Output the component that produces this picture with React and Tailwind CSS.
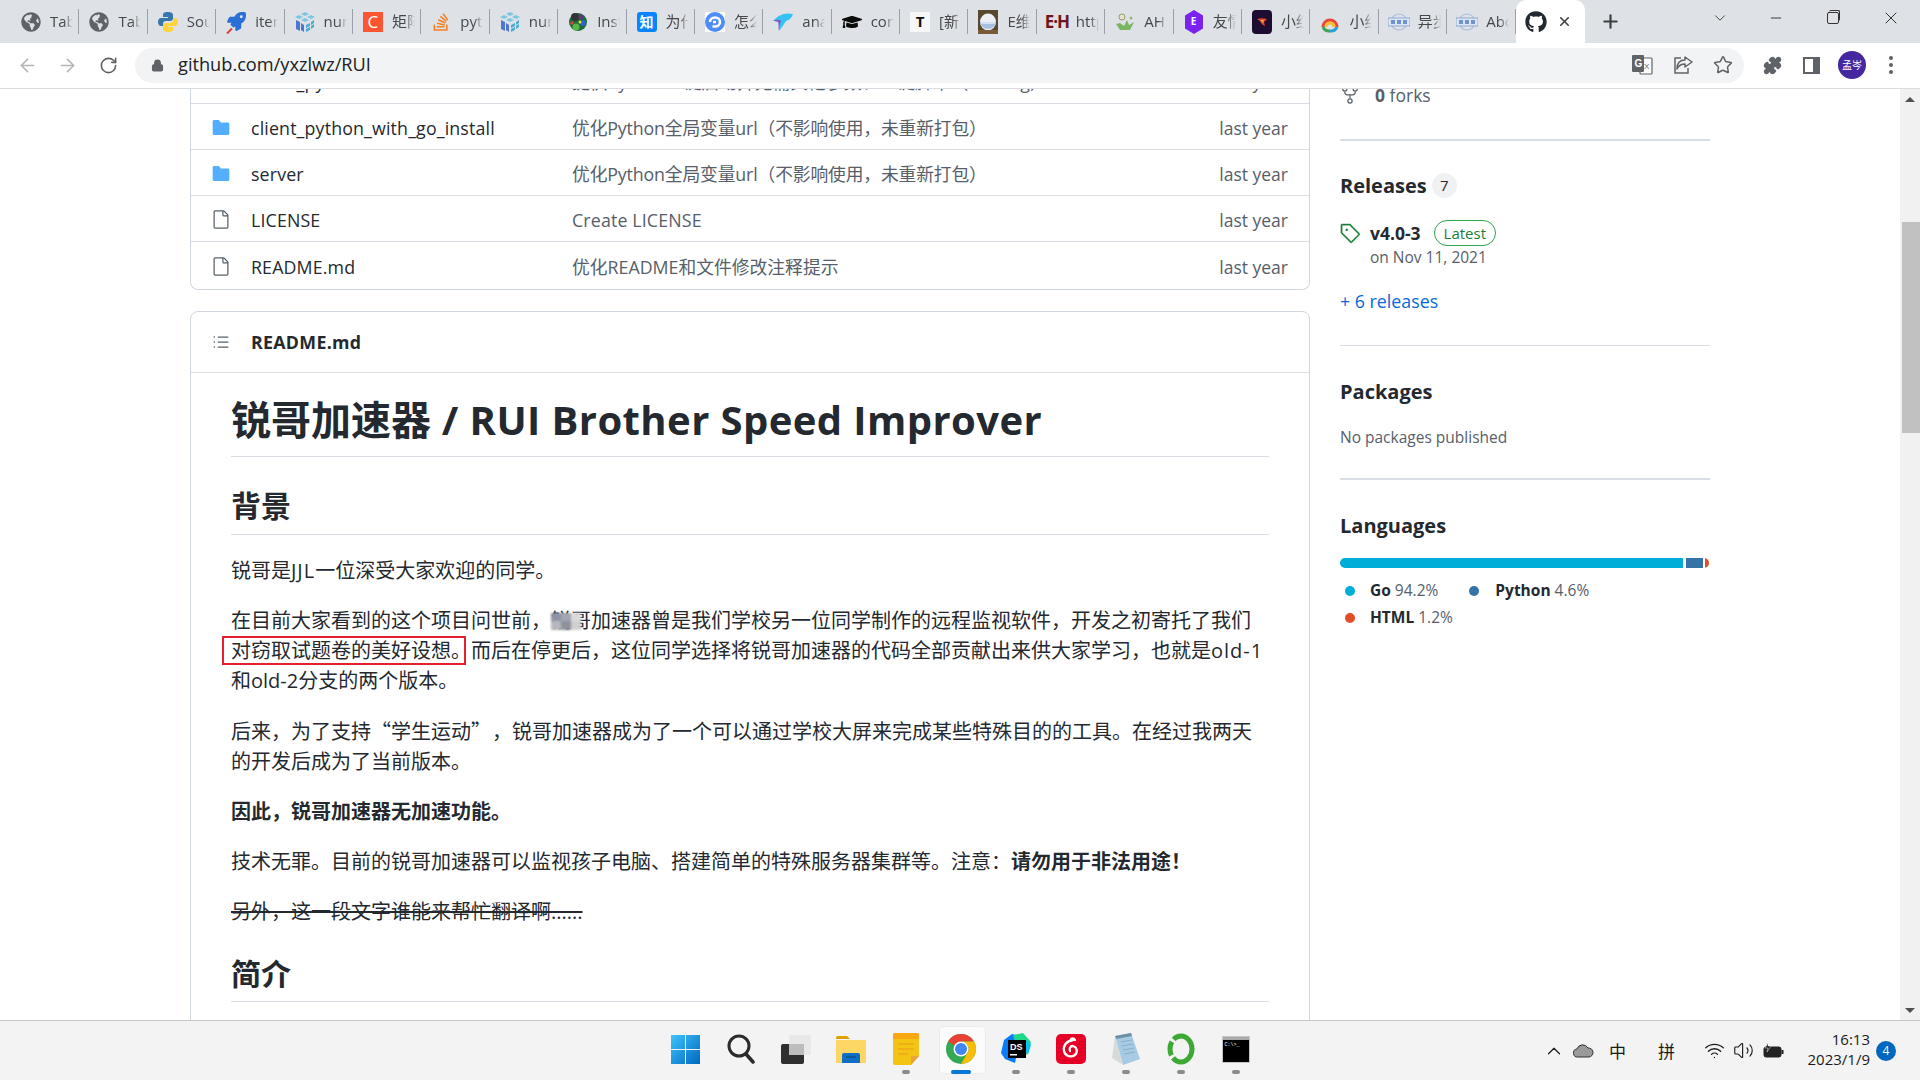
import React from "react";
import { ArrowLeft, ArrowRight, RotateCw, Lock, Star, Puzzle, ChevronDown, ChevronUp, Minus, X, Plus, Wifi, Volume2 } from "lucide-react";
import { FaGlobeAmericas, FaGraduationCap, FaRocket, FaGithub, FaStackOverflow } from "react-icons/fa";
import { GoFile, GoFileDirectoryFill, GoListUnordered, GoRepoForked, GoTag } from "react-icons/go";

function Numpy() {
  return (
    <svg width="20" height="20" viewBox="0 0 20 20">
      <path d="M10 0l4 2-4 2-4-2zM4 3l4 2-4 2-4-2zM16 3l4 2-4 2-4-2zM10 6l4 2-4 2-4-2z" fill="#7cc7e0" />
      <path d="M1 8l4 2v9l-4-2z" fill="#4d77cf" />
      <path d="M6 11l3 2v7l-3-2z" fill="#4d77cf" />
      <path d="M11 13l4-2v3l-4 2zM16 10l3-2v3l-3 2zM11 17l4-2v3l-4 2zM16 14l3-2v3l-3 2z" fill="#4dabcf" />
    </svg>
  );
}
function Py() {
  return (
    <svg width="20" height="22" viewBox="0 0 20 22">
      <path d="M10 1c-4 0-5 1-5 3v2h5v1H3C1 7 0 9 0 11s1 4 3 4h2v-2c0-2 1-3 3-3h4c2 0 3-1 3-3V4c0-2-2-3-5-3z" fill="#3776ab" />
      <path d="M10 21c4 0 5-1 5-3v-2h-5v-1h7c2 0 3-2 3-4s-1-4-3-4h-2v2c0 2-1 3-3 3H8c-2 0-3 1-3 3v3c0 2 2 3 5 3z" fill="#ffd43b" />
    </svg>
  );
}
function Rocket() {
  return (
    <span className="relative flex h-5 w-5 items-center justify-center">
      <FaRocket size={19} color="#2b6fd6" />
      <span className="absolute bottom-0 left-0 h-[2px] w-[7px] -rotate-45 bg-[#d9433a]" />
    </span>
  );
}
function Ins() {
  return (
    <svg width="20" height="24" viewBox="0 0 20 24">
      <circle cx="10" cy="12" r="9" fill="#1c6b3a" />
      <circle cx="7" cy="7" r="4" fill="#333" />
      <circle cx="13" cy="7" r="2.500" fill="#5a3b7a" />
      <circle cx="15" cy="13" r="3" fill="#2f62c9" />
      <circle cx="8" cy="17" r="3.500" fill="#58b947" />
      <circle cx="4" cy="13" r="1.800" fill="#d9433a" />
      <circle cx="12" cy="12" r="1.500" fill="#e9e23a" />
    </svg>
  );
}
function Letter({ bg, color, ch, cls }) {
  return <span className={`flex h-5 w-5 items-center justify-center ${bg} ${color} ${cls || ""}`}>{ch}</span>;
}
function Swirl() {
  return (
    <svg width="20" height="20" viewBox="0 0 20 20">
      <rect width="20" height="20" fill="#fff" />
      <circle cx="10" cy="10" r="10" fill="#4e8cf7" />
      <path d="M5 10a5 4.500 0 1 1 5 4.500H7.500M8 10h3" stroke="#fff" strokeWidth="2.600" fill="none" />
    </svg>
  );
}
function Dolphin() {
  return (
    <svg width="22" height="20" viewBox="0 0 22 20">
      <path d="M1 9C6 3 13 0 21 2c-1 3-3 6-7 7-2 3-4 6-7 10 0-4 0-6 1-9-2-1-5-1-7-1z" fill="#35c2f3" />
      <path d="M1 9c2-1 6-2 8 0-1 3-2 6-2 10-1-4 0-7-1-9-2-1-3-1-5-1z" fill="#7d5fc7" />
    </svg>
  );
}
function Egg() {
  return (
    <svg width="20" height="24" viewBox="0 0 20 24">
      <rect width="20" height="24" fill="#57492f" />
      <ellipse cx="10" cy="12" rx="8" ry="8.500" fill="#eceff3" />
      <path d="M2 12h16c0 4-4 7-8 7s-8-3-8-7z" fill="#a9bfe0" />
      <path d="M3 13h14" stroke="#fff" strokeWidth="1" />
      <rect y="20" width="20" height="4" fill="#7b5a38" />
    </svg>
  );
}
function Plant() {
  return (
    <svg width="20" height="20" viewBox="0 0 20 20">
      <circle cx="7" cy="5" r="3" fill="#e8e4cc" stroke="#7a8a5a" strokeWidth="0.800" />
      <path d="M1 12l4 6h10l4-8-5 3-2-5-3 6-4-3z" fill="#7bb661" />
      <circle cx="16" cy="6" r="1.500" fill="#8fbf6f" />
    </svg>
  );
}
function Hex() {
  return (
    <span className="relative flex h-[24px] w-[20px] items-center justify-center">
      <svg width="20" height="24" viewBox="0 0 20 24" className="absolute inset-0">
        <path d="M10 0l9 5.500v13L10 24l-9-5.500v-13z" fill="#7c22ee" />
      </svg>
      <span className="relative text-[10px] font-bold text-white">E</span>
    </span>
  );
}
function DarkFav() {
  return (
    <svg width="20" height="24" viewBox="0 0 20 24">
      <rect width="20" height="24" rx="4" fill="#1d0d33" />
      <path d="M5 9c3-1 7-1 10 0l-3 3 1 4c-3-1-4-3-5-5z" fill="#e2452d" />
      <path d="M8 10l4 0-1 3z" fill="#f3a73b" />
    </svg>
  );
}
function Rainbow() {
  return (
    <svg width="20" height="24" viewBox="0 0 20 24">
      <path d="M5 4h10M7 1h6" stroke="#ddd" strokeWidth="1" />
      <path d="M3 17a7 7 0 0 1 14 0" stroke="#e8483a" strokeWidth="3" fill="none" />
      <path d="M6 17a4 4 0 0 1 8 0" stroke="#f6c02c" strokeWidth="3" fill="none" />
      <path d="M3 17a7 7 0 0 0 7 4" stroke="#3ca655" strokeWidth="3" fill="none" />
      <path d="M10 21a7 7 0 0 0 7-4" stroke="#2b9fd6" strokeWidth="3" fill="none" />
    </svg>
  );
}
function Badge() {
  return (
    <svg width="22" height="20" viewBox="0 0 22 20">
      <circle cx="11" cy="10" r="8" fill="none" stroke="#a9bddb" strokeWidth="1.200" />
      <rect x="0" y="6" width="22" height="8" fill="#dce6f3" stroke="#7c9ccb" strokeWidth="0.800" />
      <path d="M3 8h4v4H3zM9 8h4v4H9zM15 8h4v4h-4z" fill="#6f93cc" />
    </svg>
  );
}

const globe = <FaGlobeAmericas size={20} color="#5f6368" />;
const np = <Numpy />;
const tabs = [
  [globe, "Table"],
  [globe, "Table"],
  [<Py />, "Sour"],
  [<Rocket />, "iter"],
  [np, "num"],
  [<Letter bg="bg-[#fc5531]" color="text-white" ch="C" cls="text-[17px]" />, "矩阵"],
  [<FaStackOverflow size={20} color="#f48024" />, "pyth"],
  [np, "num"],
  [<Ins />, "Inst"],
  [<Letter bg="bg-[#0a84ff]" color="text-white" ch="知" cls="rounded-[3px] text-[14px] font-bold" />, "为什"],
  [<Swirl />, "怎么"],
  [<Dolphin />, "ana"],
  [<FaGraduationCap size={20} color="#0b0b0b" />, "con"],
  [<Letter bg="bg-[#f7f7f7]" color="text-[#111]" ch="T" cls="text-[15px] font-bold" />, "[新"],
  [<Egg />, "E维"],
  [<span className="text-[17px] font-bold tracking-[-1px] text-[#6f1420]">E·H</span>, "http"],
  [<Plant />, "AH"],
  [<Hex />, "友情"],
  [<DarkFav />, "小红"],
  [<Rainbow />, "小红"],
  [<Badge />, "异步"],
  [<Badge />, "Abo"],
];

function Tab({ icon, title }) {
  return (
    <div className="flex h-full w-[68.400px] shrink-0 items-center pl-[9px]">
      <span className="flex w-[22px] shrink-0 items-center justify-center">{icon}</span>
      <span className="ml-[8px] w-[23px] overflow-hidden whitespace-nowrap text-[15px] text-[#45474a] [mask-image:linear-gradient(to_right,black_60%,transparent)]">{title}</span>
      <span className="ml-auto h-[25px] w-px bg-[#9aa0a6]" />
    </div>
  );
}

function TabStrip() {
  return (
    <div className="flex h-[43px] shrink-0 items-stretch bg-[#dee1e6]">
      <div className="flex h-full pl-[11px]">
        {tabs.map((t, i) => <Tab key={i} icon={t[0]} title={t[1]} />)}
      </div>
      <div className="relative flex h-[43px] w-[69px] shrink-0 items-center rounded-t-[10px] bg-white pl-[9px]">
        <FaGithub size={22} color="#24292f" />
        <X size={15} strokeWidth={2.500} color="#3c4043" className="ml-[10px]" />
      </div>
      <div className="flex w-[52px] items-center justify-center"><Plus size={21} strokeWidth={2.500} color="#3c4043" /></div>
      <div className="flex flex-1 items-center">
        <ChevronDown size={18} strokeWidth={1.300} color="#444" className="ml-[74px] -mt-[8px]" />
        <Minus size={16} strokeWidth={1.300} color="#222" className="ml-[39px] -mt-[8px]" />
        <span className="relative ml-[43px] -mt-[8px] h-[12px] w-[12px] rounded-[2px] border border-[#333]">
          <span className="absolute -right-[2px] -top-[3px] h-[11px] w-[11px] rounded-[2px] border-r border-t border-[#333]" />
        </span>
        <X size={20} strokeWidth={1.100} color="#222" className="ml-[42px] -mt-[8px]" />
      </div>
    </div>
  );
}

function Translate() {
  return (
    <svg width="22" height="22" viewBox="0 0 22 22">
      <rect x="9" y="4" width="12" height="16" rx="1" fill="#fff" stroke="#5f6368" strokeWidth="1.200" />
      <rect x="1" y="1" width="12" height="17" rx="1" fill="#5f6368" />
      <text x="3.500" y="13" fontSize="10" fontWeight="700" fill="#fff" fontFamily="Liberation Sans">G</text>
      <text x="13" y="15" fontSize="8" fill="#5f6368" fontFamily="Liberation Sans">X</text>
    </svg>
  );
}
function ShareIc() {
  return (
    <svg width="20" height="20" viewBox="0 0 20 20" fill="none" stroke="#5f6368" strokeWidth="1.500">
      <path d="M8 3H2v15h13v-5" />
      <path d="M12 2l7 5-7 5V9c-4 0-6 1-8 5 0-6 3-9 8-9z" strokeLinejoin="round" />
    </svg>
  );
}

function Toolbar() {
  return (
    <div className="flex h-[46px] shrink-0 items-center border-b border-[#dadce0] bg-white pb-[1px]">
      <ArrowLeft size={21} strokeWidth={1.800} color="#b3b5b8" className="ml-[17px]" />
      <ArrowRight size={21} strokeWidth={1.800} color="#b3b5b8" className="ml-[19px]" />
      <RotateCw size={19} strokeWidth={2} color="#5f6368" className="ml-[21px]" />
      <div className="ml-[17px] flex h-[35px] w-[1609px] items-center rounded-full bg-[#f1f3f4] pl-[16px]">
        <Lock size={13} fill="#5f6368" color="#5f6368" strokeWidth={2.500} />
        <span className="ml-[14px] text-[18.200px] text-[#202124]">github.com/yxzlwz/RUI</span>
        <span className="ml-auto"><Translate /></span>
        <span className="ml-[20px] flex"><ShareIc /></span>
        <Star size={20} strokeWidth={1.800} color="#5f6368" className="ml-[20px] mr-[11px]" />
      </div>
      <Puzzle size={19} fill="#5f6368" color="#5f6368" className="ml-[19px]" />
      <span className="ml-[21px] flex h-[17px] w-[17px] justify-end border-[2px] border-r-[7px] border-[#5f6368] bg-white" />
      <span className="ml-[18px] flex h-[28px] w-[28px] items-center justify-center rounded-full bg-[#4527a0] text-[10px] text-white">孟岑</span>
      <span className="ml-[23px] flex flex-col gap-[3px]">
        <span className="h-[4px] w-[4px] rounded-full bg-[#5f6368]" />
        <span className="h-[4px] w-[4px] rounded-full bg-[#5f6368]" />
        <span className="h-[4px] w-[4px] rounded-full bg-[#5f6368]" />
      </span>
    </div>
  );
}

const rows = [
  ["dir", "client_python", "提供Python一键启动并无需其他参数、一键脚本（--config）", "last year", "h-[46px]", ""],
  ["dir", "client_python_with_go_install", "优化Python全局变量url（不影响使用，未重新打包）", "last year", "h-[46px]", "tracking-[-0.150px]"],
  ["dir", "server", "优化Python全局变量url（不影响使用，未重新打包）", "last year", "h-[46px]", "tracking-[-0.150px]"],
  ["file", "LICENSE", "Create LICENSE", "last year", "h-[46px]", "tracking-[0.150px]"],
  ["file", "README.md", "优化README和文件修改注释提示", "last year", "h-[47px]", ""],
];

function FileTable() {
  return (
    <div className="-mt-[31px] rounded-b-[8px] border-x border-b border-[#d0d7de] text-[17.800px] leading-[24px]">
      {rows.map((r, i) => (
        <div key={r[1]} className={`flex items-center pt-[2px] ${r[4]} ${i < 4 ? "border-b border-[#d8dee4]" : ""}`}>
          <span className="ml-[20px] flex w-[20px] justify-center">
            {r[0] === "dir" ? <GoFileDirectoryFill size={23} color="#54aeff" /> : <GoFile size={21} color="#57606a" />}
          </span>
          <span className="ml-[20px] w-[321px] tracking-[0.150px] text-[#24292f]">{r[1]}</span>
          <span className={`flex-1 whitespace-nowrap text-[#57606a] ${r[5]}`}>{r[2]}</span>
          <span className="mr-[21px] text-[17.500px] text-[#57606a]">{r[3]}</span>
        </div>
      ))}
    </div>
  );
}

function Mosaic() {
  return (
    <span className="absolute left-0 top-[6px] grid h-[17px] w-[30px] grid-cols-3 grid-rows-2 blur-[1px]">
      <span className="bg-[#8d93a5]" /><span className="bg-[#a3a7b2]" /><span className="bg-[#dadada]" />
      <span className="bg-[#b6b8bf]" /><span className="bg-[#8f929b]" /><span className="bg-[#cfcfcf]" />
    </span>
  );
}

function Readme() {
  const h2 = "border-b border-[#d8dee4] pb-[9px] text-[30px] font-bold leading-[37.500px] text-[#24292f]";
  return (
    <div className="mt-[21px] h-[900px] rounded-t-[8px] border border-[#d0d7de]">
      <div className="flex h-[61px] items-center border-b border-[#d8dee4] pl-[20px]">
        <GoListUnordered size={20} color="#57606a" />
        <span className="ml-[20px] text-[17.800px] font-bold tracking-[0.300px] text-[#24292f]">README.md</span>
      </div>
      <div className="px-[40px] pt-[22px] text-[20px] leading-[30px] text-[#24292f]">
        <h1 className="border-b border-[#d8dee4] pb-[11px] text-[40px] font-bold leading-[50px]">锐哥加速器<span className="tracking-[0.420px]"> / RUI Brother Speed Improver</span></h1>
        <h2 className={`mt-[30px] ${h2}`}>背景</h2>
        <p className="mt-[21px]">锐哥是<span className="tracking-[1px]">JJL</span>一位深受大家欢迎的同学。</p>
        <p className="mt-[20px]">
          在目前大家看到的这个项目问世前，<span className="relative">锐<Mosaic /></span>哥加速器曾是我们学校另一位同学制作的远程监视软件，开发之初寄托了我们
          <br />
          <span className="relative">对窃取试题卷的美好设想。<span className="absolute -bottom-[1px] -left-[9px] right-[5px] -top-[1px] border-2 border-[#e3202c]" /></span>而后在停更后，这位同学选择将锐哥加速器的代码全部贡献出来供大家学习，也就是<span className="tracking-[1px]">old-1</span>
          <br />
          和old-2分支的两个版本。
        </p>
        <p className="mt-[20px]">
          后来，为了支持<span className="[font-family:'Noto_Sans_CJK_SC',sans-serif]">“</span>学生运动<span className="pr-[11px] [font-family:'Noto_Sans_CJK_SC',sans-serif]">”</span>，锐哥加速器成为了一个可以通过学校大屏来完成某些特殊目的的工具。在经过我两天
          <br />
          的开发后成为了当前版本。
        </p>
        <p className="mt-[20px] font-bold">因此，锐哥加速器无加速功能。</p>
        <p className="mt-[20px]">技术无罪。目前的锐哥加速器可以监视孩子电脑、搭建简单的特殊服务器集群等。注意：<strong className="font-bold">请勿用于非法用途！</strong></p>
        <p className="mt-[20px]"><del className="decoration-2">另外，这一段文字谁能来帮忙翻译啊......</del></p>
        <h2 className={`mt-[28px] ${h2}`}>简介</h2>
      </div>
    </div>
  );
}

function Sidebar() {
  const sep = "w-full bg-[#d8dee4]";
  const title = "text-[20px] font-bold leading-[25px] text-[#24292f]";
  return (
    <div className="ml-[30px] w-[370px] shrink-0">
      <div className="-mt-[10px] flex h-[32px] items-center text-[#57606a]">
        <GoRepoForked size={20} className="mr-[15px]" />
        <span className="text-[17.500px]"><b className="font-bold">0</b> forks</span>
      </div>
      <div className={`mt-[28px] h-[2px] ${sep}`} />
      <div className="mt-[32px] flex items-center">
        <span className={title}>Releases</span>
        <span className="ml-[5px] flex h-[25px] w-[25px] items-center justify-center rounded-full bg-[#eff1f3] text-[15px] text-[#24292f]">7</span>
      </div>
      <div className="mt-[21px] flex h-[28px] items-center">
        <GoTag size={21} color="#1a7f37" className="stroke-[#1a7f37] stroke-[0.4px]" />
        <span className="ml-[9px] text-[17.500px] font-bold text-[#24292f]">v4.0-3</span>
        <span className="ml-[13px] flex h-[26px] items-center rounded-full border border-[#2da44e] px-[9px] text-[15px] text-[#1a7f37]">Latest</span>
      </div>
      <div className="ml-[30px] text-[15.500px] leading-[20px] text-[#57606a]">on Nov 11, 2021</div>
      <div className="mt-[22px] text-[17.800px] leading-[24px] text-[#0969da]">+ 6 releases</div>
      <div className={`mt-[32px] h-px ${sep}`} />
      <div className={`mt-[33px] ${title}`}>Packages</div>
      <div className="mt-[23px] text-[15.500px] leading-[20px] text-[#57606a]">No packages published</div>
      <div className={`mt-[31px] h-[2px] ${sep}`} />
      <div className={`mt-[33px] ${title}`}>Languages</div>
      <div className="mt-[20px] flex h-[10px] w-[369px] overflow-hidden rounded-full">
        <span className="w-[343px] bg-[#00add8]" />
        <span className="ml-[3px] w-[17px] bg-[#3572a5]" />
        <span className="ml-[2px] w-[4px] bg-[#e34c26]" />
      </div>
      <div className="mt-[12px] flex h-[22px] items-center text-[15.500px] text-[#57606a]">
        <span className="ml-[5px] h-[10px] w-[10px] rounded-full bg-[#00add8]" />
        <span className="ml-[15px]"><b className="font-bold text-[#24292f]">Go</b> 94.2%</span>
        <span className="ml-[31px] h-[10px] w-[10px] rounded-full bg-[#3572a5]" />
        <span className="ml-[16px]"><b className="font-bold text-[#24292f]">Python</b> 4.6%</span>
      </div>
      <div className="mt-[5px] flex h-[22px] items-center text-[15.500px] text-[#57606a]">
        <span className="ml-[5px] h-[10px] w-[10px] rounded-full bg-[#e34c26]" />
        <span className="ml-[15px]"><b className="font-bold text-[#24292f]">HTML</b> 1.2%</span>
      </div>
    </div>
  );
}

function Scrollbar() {
  return (
    <div className="flex w-[20px] shrink-0 flex-col bg-[#f1f1f1]">
      <div className="flex h-[20px] items-center justify-center">
        <span className="h-0 w-0 border-x-[5px] border-b-[5px] border-x-transparent border-b-[#505050]" />
      </div>
      <div className="ml-[2px] mt-[113px] h-[211px] w-[18px] bg-[#c1c1c1]" />
      <div className="mt-auto flex h-[20px] items-center justify-center">
        <span className="h-0 w-0 border-x-[5px] border-t-[5px] border-x-transparent border-t-[#505050]" />
      </div>
    </div>
  );
}

function Win() {
  return (
    <svg width="29" height="29" viewBox="0 0 29 29">
      <defs><linearGradient id="w" x1="0" y1="0" x2="1" y2="1"><stop offset="0" stopColor="#3fc4fb" /><stop offset="1" stopColor="#0067c0" /></linearGradient></defs>
      <path d="M0 0h14v14H0zM15 0h14v14H15zM0 15h14v14H0zM15 15h14v14H15z" fill="url(#w)" />
    </svg>
  );
}
function Search() {
  return (
    <svg width="30" height="30" viewBox="0 0 30 30" fill="none" stroke="#2b2b2b" strokeWidth="3">
      <circle cx="13" cy="12" r="10" /><path d="M20 20l7 8" strokeLinecap="round" strokeWidth="3.500" />
    </svg>
  );
}
function TaskView() {
  return (
    <span className="relative h-[29px] w-[30px]">
      <span className="absolute bottom-0 left-0 h-[20px] w-[23px] rounded-[2px] bg-[#2f2f2f]" />
      <span className="absolute right-0 top-0 h-[20px] w-[22px] rounded-[2px] bg-[#e8e8e8]" />
      <span className="absolute left-[8px] top-[9px] h-[11px] w-[15px] bg-[#bdbdbd]" />
    </span>
  );
}
function Explorer() {
  return (
    <svg width="30" height="27" viewBox="0 0 30 27">
      <path d="M0 2a2 2 0 0 1 2-2h9l3 3H0z" fill="#e0a100" />
      <path d="M0 4h30v23H0z" fill="#fdd765" />
      <path d="M6 19a2 2 0 0 1 2-2h14a2 2 0 0 1 2 2v8H6z" fill="#0f6fc6" />
      <path d="M10 21h10" stroke="#0a4f91" strokeWidth="1.500" />
    </svg>
  );
}
function Sticky() {
  return (
    <svg width="26" height="32" viewBox="0 0 26 32">
      <path d="M2 0h22a2 2 0 0 1 2 2v21l-8 9H2a2 2 0 0 1-2-2V2a2 2 0 0 1 2-2z" fill="#f4c414" />
      <path d="M0 2a2 2 0 0 1 2-2h22a2 2 0 0 1 2 2v4H0z" fill="#f7a711" />
      <path d="M5 11h16M5 16h16M5 21h10" stroke="#ea9a1a" strokeWidth="1.200" />
      <path d="M18 32l8-9h-8z" fill="#e8a53c" />
    </svg>
  );
}
function Chrome() {
  return (
    <svg width="30" height="30" viewBox="0 0 30 30">
      <circle cx="15" cy="15" r="15" fill="#34a853" />
      <path d="M15 0a15 15 0 0 1 13 7.500H15a7.500 7.500 0 0 0-6.500 3.750L2 7.500A15 15 0 0 1 15 0z" fill="#ea4335" />
      <path d="M28 7.500A15 15 0 0 1 15 30l6.500-11.250A7.500 7.500 0 0 0 15 7.500z" fill="#fbbc04" />
      <circle cx="15" cy="15" r="7.500" fill="#fff" />
      <circle cx="15" cy="15" r="6" fill="#4285f4" />
    </svg>
  );
}
function DS() {
  return (
    <svg width="30" height="32" viewBox="0 0 30 32">
      <path d="M3 7l8-6 8 2-5 27-10-4L0 20z" fill="#087cfa" />
      <path d="M12 2l10-2 8 9-3 12-8 3z" fill="#21d789" />
      <path d="M24 6l6 6-3 9-5-3z" fill="#07c3f2" />
      <rect x="7" y="7" width="18" height="18" fill="#000" />
      <text x="9" y="17" fontSize="9" fontWeight="700" fill="#fff" fontFamily="Liberation Sans">DS</text>
      <rect x="9" y="21" width="7" height="1.500" fill="#fff" />
    </svg>
  );
}
function Netease() {
  return (
    <svg width="30" height="30" viewBox="0 0 30 30">
      <rect width="30" height="30" rx="5" fill="#e60026" />
      <path d="M17 6c-7 1-10 6-9 11 1 5 7 7 11 4 3-3 2-8-2-9-3 0-4 3-3 5M15 6c0-2 3-2 4 0" fill="none" stroke="#fff" strokeWidth="2.300" strokeLinecap="round" />
    </svg>
  );
}
function Notepad() {
  return (
    <svg width="28" height="32" viewBox="0 0 28 32">
      <path d="M3 3l16-3 9 26-17 6z" fill="#a6cbe3" />
      <path d="M3 3l16-3 1 3-16 3z" fill="#6d8fa5" />
      <path d="M3 3L0 25l11 7z" fill="#d7dbd8" />
      <path d="M9 9l11-2M10 13l11-2M11 17l11-2M12 21l11-2" stroke="#7fa8c3" strokeWidth="0.800" />
    </svg>
  );
}
function Ring() {
  return (
    <svg width="28" height="32" viewBox="0 0 28 32">
      <ellipse cx="14" cy="16" rx="11" ry="13" fill="none" stroke="#3ca934" strokeWidth="5" strokeDasharray="28 3 14 3 30 2" />
    </svg>
  );
}
function Cmd() {
  return (
    <span className="flex h-[27px] w-[28px] flex-col border border-[#c5c5c5] bg-black">
      <span className="h-[3px] bg-[#aaa]" />
      <span className="ml-[2px] mt-[3px] text-[5px] leading-[5px] text-white [font-family:'Liberation_Mono',monospace]">C:\&gt;_</span>
    </span>
  );
}

const apps = [
  [<Win />, 0], [<Search />, 0], [<TaskView />, 0], [<Explorer />, 0], [<Sticky />, 1],
  [<Chrome />, 2], [<DS />, 1], [<Netease />, 1], [<Notepad />, 1], [<Ring />, 1], [<Cmd />, 1],
];

function Taskbar() {
  return (
    <div className="flex h-[60px] shrink-0 items-stretch border-t border-[#c6c6c6] bg-[#f3f3f3]">
      <div className="ml-[658px] flex">
        {apps.map((a, i) => (
          <div key={i} className="relative flex w-[55px] items-center justify-center">
            {a[1] === 2 && <span className="absolute left-[6px] top-[5px] h-[48px] w-[47px] rounded-[4px] border border-[#ececec] bg-[#fbfbfb]" />}
            <span className="relative -mt-[3px] flex items-center justify-center">{a[0]}</span>
            {a[1] === 1 && <span className="absolute bottom-[6px] left-[24px] h-[4px] w-[8px] rounded-full bg-[#8b8b8b]" />}
            {a[1] === 2 && <span className="absolute bottom-[6px] left-[18px] h-[4px] w-[20px] rounded-full bg-[#0078d4]" />}
          </div>
        ))}
      </div>
      <div className="flex flex-1 items-center text-[#1b1b1b] [font-family:'Noto_Sans_CJK_SC',sans-serif]">
        <ChevronUp size={22} strokeWidth={1.300} className="ml-[280px]" />
        <svg width="21" height="15" viewBox="0 0 21 15" className="ml-[8px]">
          <path d="M5 14a4 4 0 0 1-1-8 6 6 0 0 1 11-1 4.500 4.500 0 0 1 1 9z" fill="#9a9a9a" stroke="#333" strokeWidth="1" />
        </svg>
        <span className="ml-[15px] w-[20px] text-[17px]">中</span>
        <span className="ml-[29px] w-[20px] text-[17px]">拼</span>
        <Wifi size={21} strokeWidth={1.500} className="ml-[26px]" />
        <Volume2 size={21} strokeWidth={1.300} className="ml-[8px]" />
        <svg width="21" height="16" viewBox="0 0 21 16" className="ml-[9px]">
          <rect x="1" y="4" width="17" height="10" rx="2" fill="#222" stroke="#222" />
          <rect x="18.500" y="7" width="2" height="4" fill="#222" />
          <path d="M5 0L2 5h3L4 9l4-6H5z" fill="#222" stroke="#f3f3f3" strokeWidth="0.500" />
        </svg>
        <div className="-mt-[4px] ml-[13px] flex w-[73px] flex-col items-end text-[15px] leading-[20px] [font-family:'Open_Sans',sans-serif]">
          <span>16:13</span>
          <span>2023/1/9</span>
        </div>
        <span className="ml-[6px] flex h-[20px] w-[20px] items-center justify-center rounded-full bg-[#0067c0] text-[12px] text-white [font-family:'Open_Sans',sans-serif]">4</span>
      </div>
    </div>
  );
}

export default function App() {
  return (
    <div className="flex h-[1080px] w-[1920px] flex-col overflow-hidden bg-white [font-family:'Open_Sans','Noto_Sans_CJK_SC',sans-serif]">
      <TabStrip />
      <Toolbar />
      <div className="flex min-h-0 flex-1 overflow-hidden">
        <div className="flex flex-1 overflow-hidden pl-[190px]">
          <div className="w-[1120px] shrink-0">
            <FileTable />
            <Readme />
          </div>
          <Sidebar />
        </div>
        <Scrollbar />
      </div>
      <Taskbar />
    </div>
  );
}
